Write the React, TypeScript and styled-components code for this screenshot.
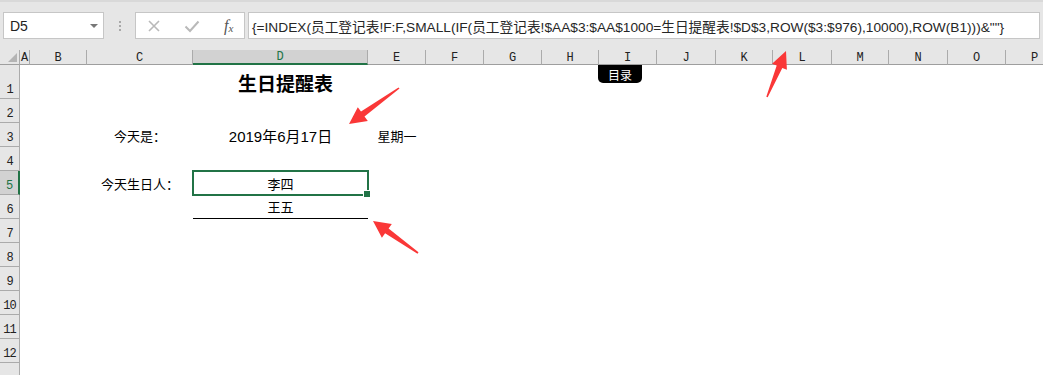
import React from 'react';
import styled, { createGlobalStyle } from 'styled-components';

const GlobalStyle = createGlobalStyle`
    html, body {
        margin: 0;
        padding: 0;
        background: #ffffff;
    }
    * {
        box-sizing: border-box;
    }
`;

const COLS = ['A', 'B', 'C', 'D', 'E', 'F', 'G', 'H', 'I', 'J', 'K', 'L', 'M', 'N', 'O', 'P'];
const COL_WIDTHS = [10, 57, 106, 175, 58, 58, 58, 57, 58, 59, 57, 59, 57, 59, 58, 58];
const ROWS = [1, 2, 3, 4, 5, 6, 7, 8, 9, 10, 11, 12, 13];
// row 13 is only partly in view, its number sits below the window edge
const LAST_VISIBLE_LABEL = 12;

const FORMULA = '{=INDEX(员工登记表!F:F,SMALL(IF(员工登记表!$AA$3:$AA$1000=生日提醒表!$D$3,ROW($3:$976),10000),ROW(B1)))&""}';

type Pt = [number, number];

// tapered arrow: thin tail widening to a neck, then barbed head
const arrowPoints = (tail: Pt, tip: Pt, headLen: number, headW: number, neckW: number) => {
    const dx = tip[0] - tail[0];
    const dy = tip[1] - tail[1];
    const len = Math.hypot(dx, dy);
    const ux = dx / len;
    const uy = dy / len;
    const px = -uy;
    const py = ux;
    const nx = tip[0] - ux * headLen;
    const ny = tip[1] - uy * headLen;
    const pts: Pt[] = [
        [tail[0] + px * 0.8, tail[1] + py * 0.8],
        [nx + px * neckW / 2, ny + py * neckW / 2],
        [nx + px * headW / 2, ny + py * headW / 2],
        tip,
        [nx - px * headW / 2, ny - py * headW / 2],
        [nx - px * neckW / 2, ny - py * neckW / 2],
        [tail[0] - px * 0.8, tail[1] - py * 0.8],
    ];
    return pts.map(p => `${p[0].toFixed(1)},${p[1].toFixed(1)}`).join(' ');
};

const App = () => {
    return (
        <StyledApp>
            <GlobalStyle />
            <StyledFormulaBar>
                <StyledNameBox>
                    <span>D5</span>
                    <StyledCaret />
                </StyledNameBox>
                <StyledGrip>
                    <i /><i /><i />
                </StyledGrip>
                <StyledButtons>
                    <StyledBarButton>
                        <svg width="14" height="14" viewBox="0 0 14 14">
                            <path d="M2 2 L12 12 M12 2 L2 12" stroke="#b9b9b9" strokeWidth="1.6" fill="none" />
                        </svg>
                    </StyledBarButton>
                    <StyledBarButton>
                        <svg width="16" height="14" viewBox="0 0 16 14">
                            <path d="M1.5 7.5 L6 12 L14.5 2.5" stroke="#b9b9b9" strokeWidth="2" fill="none" />
                        </svg>
                    </StyledBarButton>
                    <StyledFx>f<sub>x</sub></StyledFx>
                </StyledButtons>
                <StyledFormulaInput>{FORMULA}</StyledFormulaInput>
            </StyledFormulaBar>

            <StyledSheet>
                <StyledCorner>
                    <svg width="9" height="9" viewBox="0 0 9 9">
                        <polygon points="9,0 9,9 0,9" fill="#b4b4b4" />
                    </svg>
                </StyledCorner>
                {COLS.map((c, i) => (
                    <StyledColHeader key={c} $col={i + 2} $active={c === 'D'}>{c}</StyledColHeader>
                ))}
                {ROWS.map((r) => (
                    <StyledRowHeader key={r} $row={r + 1} $active={r === 5}>
                        {r <= LAST_VISIBLE_LABEL ? r : ''}
                    </StyledRowHeader>
                ))}

                <StyledTitle $col={5} $row={2}>生日提醒表</StyledTitle>
                <StyledCell $col={4} $row={4}>今天是：</StyledCell>
                <StyledCell $col={5} $row={4} $size={15}>2019年6月17日</StyledCell>
                <StyledCell $col={6} $row={4}>星期一</StyledCell>
                <StyledCell $col={4} $row={6}>今天生日人：</StyledCell>
                <StyledSelectedCell $col={5} $row={6}>李四</StyledSelectedCell>
                <StyledCell $col={5} $row={7} $underline>王五</StyledCell>

                <StyledShapeButton>目录</StyledShapeButton>
            </StyledSheet>

            <StyledArrows width="1043" height="375" viewBox="0 0 1043 375">
                <polygon points={arrowPoints([399, 88], [349, 124], 17, 17, 6)} fill="#fa3737" />
                <polygon points={arrowPoints([418, 253], [373, 221], 17, 17, 6)} fill="#fa3737" />
                <polygon points={arrowPoints([767, 97], [786, 51], 17, 16, 6)} fill="#fa3737" />
            </StyledArrows>
        </StyledApp>
    );
};

export default App;

const StyledApp = styled.div`
    position: relative;
    width: 1043px;
    height: 375px;
    overflow: hidden;
    background: #ffffff;
    font-family: 'Liberation Sans', 'Noto Sans CJK SC', sans-serif;
`;

const StyledFormulaBar = styled.div`
    height: 50px;
    background: #e6e6e6;
    border-top: 2px solid #d9d9d9;
    display: flex;
    align-items: flex-start;
    padding: 10px 3px 0 3px;
`;

const StyledNameBox = styled.div`
    width: 101px;
    height: 27px;
    background: #ffffff;
    border: 1px solid #c6c6c6;
    display: flex;
    align-items: center;
    justify-content: space-between;
    padding: 0 5px 0 6px;
    font-size: 14px;
    color: #222222;
`;

const StyledCaret = styled.div`
    width: 0;
    height: 0;
    border-left: 4px solid transparent;
    border-right: 4px solid transparent;
    border-top: 4px solid #777777;
`;

const StyledGrip = styled.div`
    width: 31px;
    height: 27px;
    display: flex;
    flex-direction: column;
    align-items: center;
    justify-content: center;
    gap: 2px;

    i {
        width: 2px;
        height: 2px;
        background: #a8a8a8;
    }
`;

const StyledButtons = styled.div`
    width: 110px;
    height: 27px;
    background: #ffffff;
    border: 1px solid #c6c6c6;
    display: flex;
    align-items: center;
    padding-left: 10px;
`;

const StyledBarButton = styled.div`
    width: 37px;
    display: flex;
    align-items: center;
    padding-left: 1px;
`;

const StyledFx = styled.div`
    font-family: 'Liberation Serif', serif;
    font-style: italic;
    font-size: 16px;
    color: #555555;
    margin-left: 4px;

    sub {
        font-size: 11px;
        vertical-align: -1px;
    }
`;

const StyledFormulaInput = styled.div`
    flex: 1;
    height: 27px;
    margin-left: 3px;
    background: #ffffff;
    border: 1px solid #c6c6c6;
    display: flex;
    align-items: center;
    padding-left: 3px;
    font-size: 13.7px;
    color: #262626;
    white-space: nowrap;
    overflow: hidden;
`;

const StyledSheet = styled.div`
    position: relative;
    display: grid;
    grid-template-columns: 20px ${COL_WIDTHS.map(w => `${w}px`).join(' ')};
    grid-template-rows: 15px 34px repeat(12, 24px);
`;

const StyledCorner = styled.div`
    grid-column: 1;
    grid-row: 1;
    background: #e6e6e6;
    border-right: 1px solid #ababab;
    border-bottom: 1px solid #9e9e9e;
    display: flex;
    align-items: flex-end;
    justify-content: flex-end;
    padding: 0 2px 2px 0;
`;

const StyledColHeader = styled.div<{ $col: number; $active?: boolean }>`
    grid-column: ${p => p.$col};
    grid-row: 1;
    background: ${p => p.$active ? '#d2d2d2' : '#e6e6e6'};
    border-right: 1px solid #ababab;
    border-bottom: ${p => p.$active ? '2px solid #217346' : '1px solid #9e9e9e'};
    display: flex;
    align-items: center;
    justify-content: center;
    font-family: 'Liberation Mono', monospace;
    font-size: 12px;
    line-height: 1;
    padding-top: 1px;
    color: ${p => p.$active ? '#217346' : '#222222'};
`;

const StyledRowHeader = styled.div<{ $row: number; $active?: boolean }>`
    grid-column: 1;
    grid-row: ${p => p.$row};
    background: ${p => p.$active ? '#d2d2d2' : '#e6e6e6'};
    border-right: ${p => p.$active ? '2px solid #217346' : '1px solid #ababab'};
    border-bottom: 1px solid #ababab;
    display: flex;
    align-items: flex-end;
    justify-content: center;
    padding-bottom: 2px;
    font-family: 'Liberation Mono', monospace;
    font-size: 12px;
    line-height: 1;
    letter-spacing: -1px;
    color: ${p => p.$active ? '#217346' : '#222222'};
`;

const StyledCell = styled.div<{ $col: number; $row: number; $size?: number; $underline?: boolean }>`
    grid-column: ${p => p.$col};
    grid-row: ${p => p.$row};
    display: flex;
    align-items: center;
    justify-content: center;
    font-size: ${p => p.$size ?? 13}px;
    color: #000000;
    white-space: nowrap;
    border-bottom: ${p => p.$underline ? '1px solid #000000' : 'none'};
`;

const StyledTitle = styled(StyledCell)`
    font-family: 'Noto Sans CJK SC', sans-serif;
    font-size: 19px;
    font-weight: 700;
    padding-left: 10px;
`;

const StyledSelectedCell = styled(StyledCell)`
    position: relative;

    &::after {
        content: '';
        position: absolute;
        inset: -1px;
        border: 2px solid #217346;
    }

    &::before {
        content: '';
        position: absolute;
        right: -3px;
        bottom: -3px;
        width: 6px;
        height: 6px;
        background: #217346;
        border: 1px solid #ffffff;
        z-index: 1;
    }
`;

const StyledShapeButton = styled.div`
    position: absolute;
    left: 598px;
    top: 15px;
    width: 44px;
    height: 18px;
    background: #000000;
    border-radius: 0 0 5px 5px;
    color: #ffffff;
    font-family: 'Noto Sans CJK SC', sans-serif;
    font-size: 12px;
    display: flex;
    align-items: center;
    justify-content: center;
`;

const StyledArrows = styled.svg`
    position: absolute;
    left: 0;
    top: 0;
    pointer-events: none;
`;
